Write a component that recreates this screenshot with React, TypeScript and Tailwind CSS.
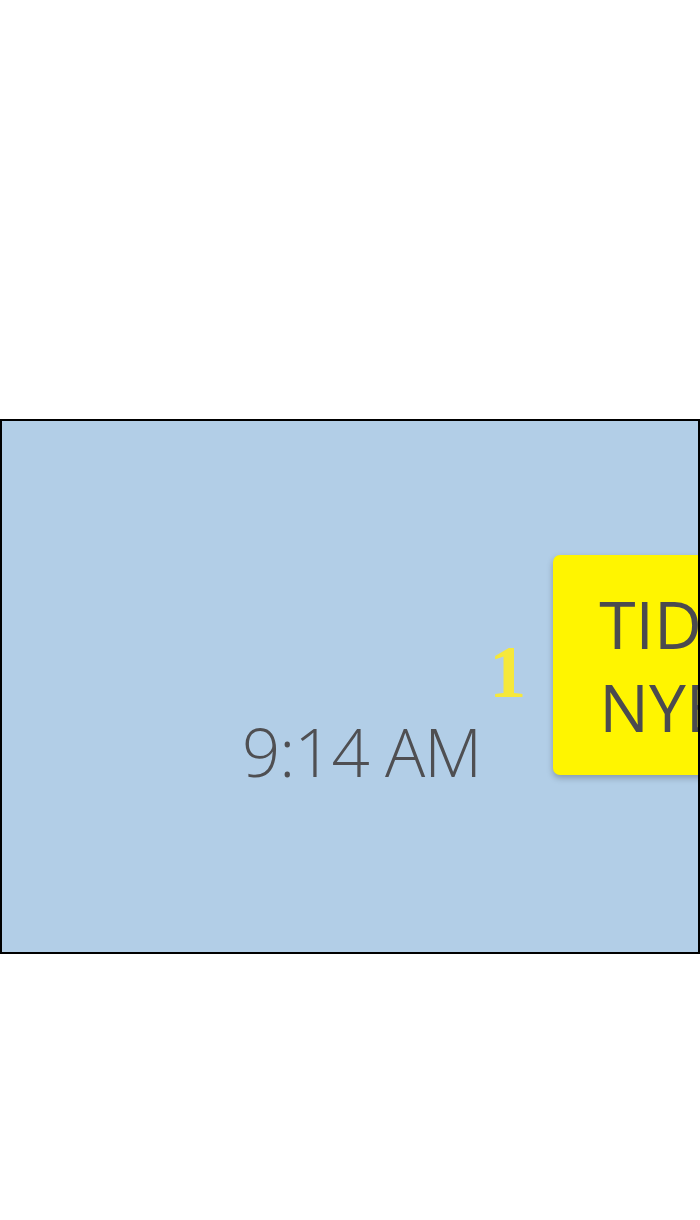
import React from "react";

function NoticeCard() {
  return (
    <div className="ml-[27px] mt-[134px] h-[220px] w-[260px] shrink-0 rounded-[7px] bg-[#fff500] pl-[46px] pt-[27px] shadow-[0_3px_6px_rgba(0,0,0,0.25)]">
      <div className="whitespace-nowrap font-['Open_Sans',sans-serif] text-[66px] leading-[83px] text-[#4b4b4f]">
        <div>TIDE</div>
        <div>NYE</div>
      </div>
    </div>
  );
}

export default function App() {
  return (
    <div className="min-h-[1220px] bg-white pt-[419px]">
      <div className="flex h-[535px] w-[700px] items-start overflow-hidden border-2 border-black bg-[#b2cee7]">
        <div className="ml-[240px] mt-[297px] shrink-0 whitespace-nowrap font-['Open_Sans',sans-serif] text-[67px] font-light leading-none tracking-[-1px] text-[#4f4f52]">
          9:14 AM
        </div>
        <div className="ml-[8px] mt-[214px] shrink-0 font-['Liberation_Serif',serif] text-[74px] font-bold leading-none text-[#f6e83a]">
          1
        </div>
        <NoticeCard />
      </div>
    </div>
  );
}
